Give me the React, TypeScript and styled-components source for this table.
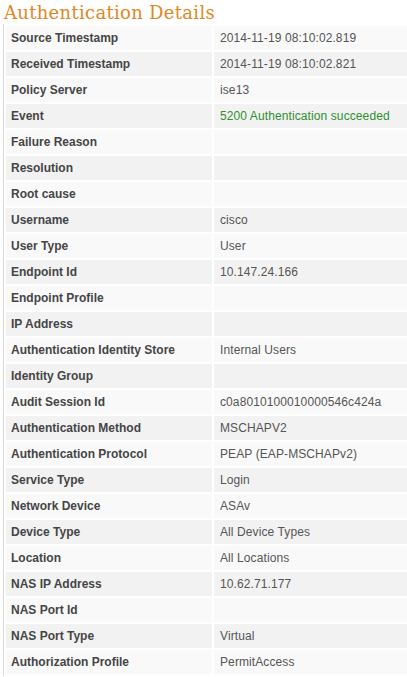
import React from "react";
import styled, { createGlobalStyle } from "styled-components";

const Global = createGlobalStyle`
  html, body { margin: 0; padding: 0; background: #fff; }
  body { font-family: "Liberation Sans", Arial, sans-serif; }
`;

const Page = styled.div`
  width: 407px;
  padding: 2px 0 0 0;
  box-sizing: border-box;
  overflow: hidden;
`;

const Title = styled.h2`
  margin: 0 0 0 4px;
  font-family: "DejaVu Serif", serif;
  font-weight: normal;
  font-size: 18px;
  line-height: 22px;
  color: #e0871f;
  letter-spacing: 0.3px;
`;

const Frame = styled.div`
  margin-left: 3px;
  border-left: 1px solid #dcdcdc;
`;

const Table = styled.table`
  width: 405px;
  border-collapse: separate;
  border-spacing: 2px;
  margin-top: 0;
  font-size: 12px;
`;

const Row = styled.tr<{ $shade: boolean }>`
  background: transparent;
  & > td {
    background: ${(p) => (p.$shade ? "#f2f2f2" : "#f9f9f9")};
  }
`;

const Label = styled.td`
  width: 201px;
  height: 24px;
  padding: 0 0 0 5px;
  font-weight: bold;
  color: #454545;
  vertical-align: middle;
`;

const Value = styled.td<{ $ok?: boolean }>`
  height: 24px;
  padding: 0 0 0 6px;
  color: ${(p) => (p.$ok ? "#2f8f2f" : "#555")};
  vertical-align: middle;
  letter-spacing: 0.1px;
`;

const rows: [string, string, boolean?][] = [
  ["Source Timestamp", "2014-11-19 08:10:02.819"],
  ["Received Timestamp", "2014-11-19 08:10:02.821"],
  ["Policy Server", "ise13"],
  ["Event", "5200 Authentication succeeded", true],
  ["Failure Reason", ""],
  ["Resolution", ""],
  ["Root cause", ""],
  ["Username", "cisco"],
  ["User Type", "User"],
  ["Endpoint Id", "10.147.24.166"],
  ["Endpoint Profile", ""],
  ["IP Address", ""],
  ["Authentication Identity Store", "Internal Users"],
  ["Identity Group", ""],
  ["Audit Session Id", "c0a8010100010000546c424a"],
  ["Authentication Method", "MSCHAPV2"],
  ["Authentication Protocol", "PEAP (EAP-MSCHAPv2)"],
  ["Service Type", "Login"],
  ["Network Device", "ASAv"],
  ["Device Type", "All Device Types"],
  ["Location", "All Locations"],
  ["NAS IP Address", "10.62.71.177"],
  ["NAS Port Id", ""],
  ["NAS Port Type", "Virtual"],
  ["Authorization Profile", "PermitAccess"],
];

export default function App() {
  return (
    <Page>
      <Global />
      <Title>Authentication Details</Title>
      <Frame>
        <Table>
          <tbody>
            {rows.map(([k, v, ok], i) => (
              <Row key={k} $shade={i % 2 === 1}>
                <Label>{k}</Label>
                <Value $ok={ok}>{v}</Value>
              </Row>
            ))}
          </tbody>
        </Table>
      </Frame>
    </Page>
  );
}
